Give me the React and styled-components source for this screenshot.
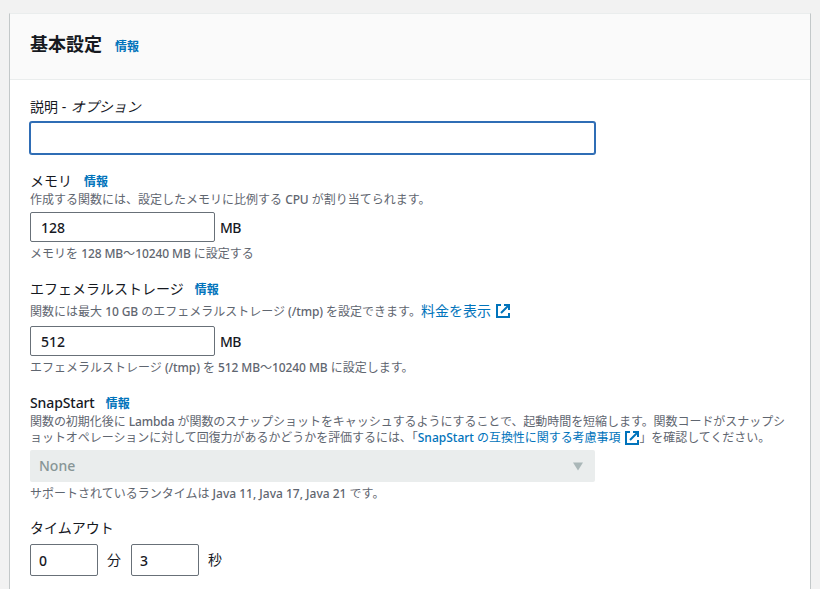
import styled, { createGlobalStyle } from "styled-components";

const colors = {
  page: "#f2f2f2",
  text: "#16191f",
  gray: "#5f6670",
  link: "#0073bb",
  line: "#eaeded",
  border: "#687078",
};

const GlobalStyle = createGlobalStyle`
  * {
    box-sizing: border-box;
  }
  body {
    margin: 0;
    height: 589px;
    overflow: hidden;
    background-color: ${colors.page};
    color: ${colors.text};
    font-family: "Noto Sans", "Noto Sans CJK JP", sans-serif;
    font-size: 14px;
    line-height: 20px;
  }
`;

const Panel = styled.section`
  width: 802px;
  height: 600px;
  margin: 13px 0 0 9px;
  background-color: white;
  border: 1px solid #c3c8c9;
  border-top-color: ${colors.line};
`;

const PanelHeader = styled.header`
  height: 66px;
  padding: 18px 20px 0;
  display: flex;
  align-items: baseline;
  background-color: #fafafa;
  border-bottom: 1px solid ${colors.line};
`;

const PanelTitle = styled.h2`
  margin: 0;
  font-size: 18px;
  line-height: 24px;
  font-weight: 700;
`;

const InfoLink = styled.a`
  margin-left: ${(props) => props.$gap || "12px"};
  color: ${colors.link};
  font-size: 12px;
  font-weight: 700;
`;

const PanelBody = styled.div`
  padding: 17px 20px;
`;

const Field = styled.div`
  margin-bottom: ${(props) => props.$space || "17px"};
`;

const LabelRow = styled.div`
  height: 20px;
  display: flex;
  align-items: baseline;
  white-space: pre;
  margin-bottom: ${(props) => props.$space || "0"};
`;

const Optional = styled.i`
  margin-left: 1px;
`;

const Description = styled.div`
  height: ${(props) => (props.$tall ? "24px" : "auto")};
  margin: ${(props) => (props.$tall ? "0 0 3px" : "1px 0 4px")};
  color: ${colors.gray};
  font-size: 12px;
  line-height: ${(props) => (props.$tall ? "24px" : "16px")};
  letter-spacing: ${(props) => props.$spacing || "0"};
  white-space: nowrap;
`;

const Latin = styled.span`
  font-weight: 500;
  letter-spacing: ${(props) => props.$spacing || "-0.1px"};
`;

const Constraint = styled.div`
  height: 16px;
  margin-top: 4px;
  color: ${colors.gray};
  font-size: 12px;
  line-height: 16px;
  white-space: nowrap;
`;

const ControlRow = styled.div`
  display: flex;
  align-items: center;
`;

const Input = styled.input`
  display: block;
  width: ${(props) => props.$width || "185px"};
  height: ${(props) => props.$height || "30px"};
  padding: ${(props) => props.$pad || "1px 10px 0"};
  border: 1px solid ${colors.border};
  border-radius: 2px;
  outline: none;
  background-color: white;
  color: ${colors.text};
  font: inherit;
  font-weight: 500;
`;

const FocusedInput = styled(Input)`
  border-color: #2f6db5;
  box-shadow: 0 0 0 1px #2f6db5;
`;

const Unit = styled.span`
  margin: ${(props) => props.$margin || "2px 0 0 5px"};
  font-weight: ${(props) => props.$weight || 500};
`;

const MegaUnit = styled(Unit)`
  letter-spacing: -0.5px;
`;

const Select = styled.div`
  width: 565px;
  height: 32px;
  padding: 0 11px 0 9px;
  display: flex;
  align-items: center;
  justify-content: space-between;
  background-color: #eaeded;
  border-radius: 2px;
  color: #879596;
  font-weight: 500;
`;

const TextLink = styled.a`
  color: ${colors.link};
  font-size: ${(props) => props.$size || "12px"};
`;

const LinkIcon = styled.svg`
  margin-left: 5px;
  vertical-align: ${(props) => props.$align || "-3px"};
  fill: none;
  stroke: ${colors.link};
  stroke-width: 2;
`;

function ExternalIcon({ align }) {
  return (
    <LinkIcon $align={align} width="14" height="14" viewBox="0 0 14 14">
      <path d="M5 1H1v12h12V9" />
      <path d="M8 1h5v5M13 1 5 9" />
    </LinkIcon>
  );
}

export default function App() {
  return (
    <>
      <GlobalStyle />
      <Panel>
        <PanelHeader>
          <PanelTitle>基本設定</PanelTitle>
          <InfoLink $gap="13px">情報</InfoLink>
        </PanelHeader>
        <PanelBody>
          <Field>
            <LabelRow $space="5px">
              説明 - <Optional>オプション</Optional>
            </LabelRow>
            <FocusedInput $width="565px" $height="32px" />
          </Field>
          <Field>
            <LabelRow>
              メモリ<InfoLink>情報</InfoLink>
            </LabelRow>
            <Description>
              作成する関数には、設定したメモリに比例する <Latin>CPU</Latin> が割り当てられます。
            </Description>
            <ControlRow>
              <Input defaultValue="128" />
              <MegaUnit>MB</MegaUnit>
            </ControlRow>
            <Constraint>
              メモリを <Latin>128 MB</Latin>〜<Latin>10240 MB</Latin> に設定する
            </Constraint>
          </Field>
          <Field>
            <LabelRow>
              エフェメラルストレージ<InfoLink $gap="11px">情報</InfoLink>
            </LabelRow>
            <Description $tall>
              関数には最大 <Latin>10 GB</Latin> のエフェメラルストレージ <Latin>(/tmp)</Latin> を設定できます。
              <TextLink $size="14px">
                料金を表示
                <ExternalIcon align="-2px" />
              </TextLink>
            </Description>
            <ControlRow>
              <Input defaultValue="512" />
              <MegaUnit>MB</MegaUnit>
            </ControlRow>
            <Constraint>
              エフェメラルストレージ <Latin>(/tmp)</Latin> を <Latin>512 MB</Latin>〜<Latin>10240 MB</Latin> に設定します。
            </Constraint>
          </Field>
          <Field $space="16px">
            <LabelRow>
              <Latin>SnapStart</Latin>
              <InfoLink $gap="11px">情報</InfoLink>
            </LabelRow>
            <Description $spacing="-0.05px">
              関数の初期化後に <Latin>Lambda</Latin> が関数のスナップショットをキャッシュするようにすることで、起動時間を短縮します。関数コードがスナップシ
              <br />
              ョットオペレーションに対して回復力があるかどうかを評価するには、「
              <TextLink>
                <Latin $spacing="0">SnapStart</Latin> の互換性に関する考慮事項
                <ExternalIcon />
              </TextLink>
              」を確認してください。
            </Description>
            <Select>
              None
              <svg width="12" height="9" viewBox="0 0 12 9">
                <path d="M1 .5h10L6 8.5z" fill="#aab7b8" />
              </svg>
            </Select>
            <Constraint>
              サポートされているランタイムは <Latin $spacing="0">Java 11, Java 17, Java 21</Latin> です。
            </Constraint>
          </Field>
          <Field>
            <LabelRow $space="6px">タイムアウト</LabelRow>
            <ControlRow>
              <Input $width="68px" $height="32px" $pad="1px 8px 0" defaultValue="0" />
              <Unit $margin="0 10px 0 9px" $weight="400">分</Unit>
              <Input $width="68px" $height="32px" $pad="1px 8px 0" defaultValue="3" />
              <Unit $margin="0 9px" $weight="400">秒</Unit>
            </ControlRow>
          </Field>
        </PanelBody>
      </Panel>
    </>
  );
}
